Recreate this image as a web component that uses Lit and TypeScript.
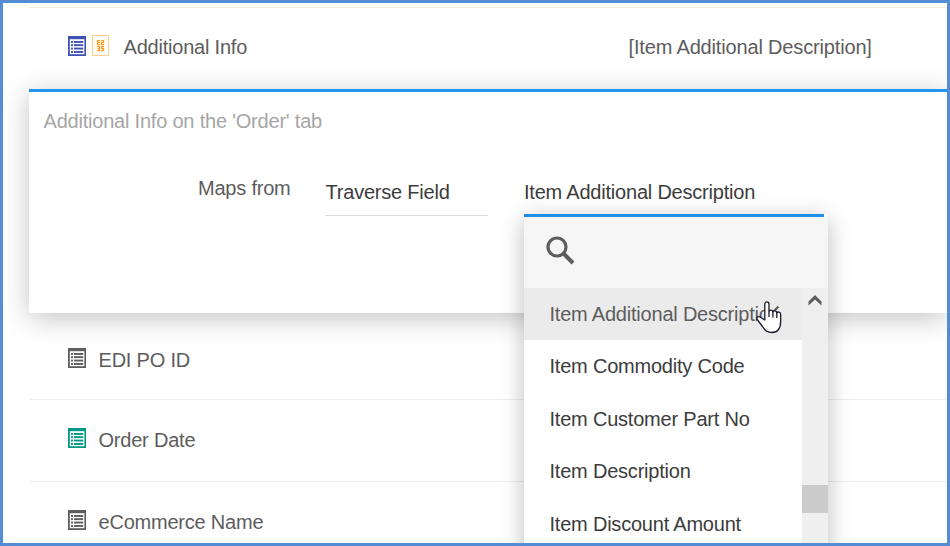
import { LitElement, html, css, svg } from "lit";
import { customElement, property } from "lit/decorators.js";

@customElement("list-icon")
class ListIcon extends LitElement {
  static styles = css`
    :host { display: block; width: 18px; height: 20px; }
    svg { display: block; }
  `;
  render() {
    return html`<svg width="18" height="20" viewBox="0 0 18 20">
      <rect width="18" height="20" fill="currentColor" />
      <rect x="1.800" y="3.200" width="14.600" height="15" fill="#fff" />
      ${[5, 8.2, 11.6, 15].map(
        (y) => svg`<rect x="3" y=${y} width="2" height="1.900" fill="currentColor" />
        <rect x="6" y=${y} width="9.200" height="1.900" fill="currentColor" />`
      )}
    </svg>`;
  }
}

@customElement("field-row")
class FieldRow extends LitElement {
  @property() label = "";
  @property() value = "";
  @property() tone = "gray";
  @property({ type: Boolean }) segment = false;

  static styles = css`
    :host { display: block; box-sizing: border-box; border-bottom: 1px solid #ececec; }
    .row { display: flex; align-items: flex-start; height: 100%; padding-left: 39px; }
    .gray { color: #5d5d5d; }
    .indigo { color: #3f51b5; }
    .teal { color: #009688; }
    .main { display: flex; width: 560.500px; }
    .seg { display: block; margin: -1px 0 0 6px; }
    .label { margin-left: 12.500px; line-height: 24px; white-space: nowrap; }
    .seg + .label { margin: -1px 0 0 14.500px; }
    .value { margin-top: -1px; line-height: 24px; white-space: nowrap; letter-spacing: -.16px; }
  `;
  render() {
    return html`<div class="row">
      <div class="main">
        <list-icon class=${this.tone}></list-icon>
        ${this.segment
          ? html`<svg class="seg" width="17" height="21" viewBox="0 0 17 21">
              <rect x=".5" y=".5" width="16" height="20" fill="#fffdf9" stroke="#ffcf8b" />
              <path d="M8 5.500H5.500V9.500H8M6 7.500H8M9 5.500H11.500V7.500H9.500V9.500H12M5 11.500H7.500V15.500H5M5.500 13.500H7M12 11.500H9.500V13.500H11.500V15.500H9" fill="none" stroke="#fba026" stroke-width="1.250" />
            </svg>`
          : ""}
        <span class="label">${this.label}</span>
      </div>
      <span class="value">${this.value}</span>
    </div>`;
  }
}

@customElement("field-picker")
class FieldPicker extends LitElement {
  static styles = css`
    :host { display: block; width: 304px; background: #fff; box-shadow: 0 5px 22px rgba(0, 0, 0, .26); }
    .accent { width: 300px; height: 3px; background: #1e8eea; }
    .top { background: #fff; }
    .search { height: 71px; background: #f6f6f6; }
    .search svg { display: block; padding: 16.500px 0 0 19.500px; }
    .body { display: flex; height: 300px; }
    .items { width: 278px; }
    .item { height: 52.5px; line-height: 52px; padding-left: 25.500px; box-sizing: border-box; white-space: nowrap; color: #3c3c3c; overflow: hidden; }
    .active { background: #ebebeb; color: #5d5d5d; height: 52px; display: flex; align-items: center; }
    .name { width: 217px; flex: none; overflow: hidden; }
    .active svg { flex: none; margin: -6px 0 0 1px; }
    .track { width: 26px; background: #efefef; }
    .track svg { display: block; margin: 7px 0 0 6px; }
    .thumb { height: 28px; margin-top: 179px; background: #cbcbcb; }
  `;
  render() {
    const items = ["Item Commodity Code", "Item Customer Part No", "Item Description", "Item Discount Amount"];
    return html`
      <div class="top"><div class="accent"></div></div>
      <div class="search">
        <svg width="34" height="34" viewBox="0 0 34 34" fill="none" stroke="#5d5d5d">
          <circle cx="13.500" cy="13.500" r="9" stroke-width="3.200" />
          <path d="M20 20L29.500 29.500" stroke-width="4" />
        </svg>
      </div>
      <div class="body">
        <div class="items">
          <div class="item active">
            <span class="name">Item Additional Description</span>
            <svg width="12" height="12" viewBox="0 0 12 12"><path d="M1 11L10.500 1.500" stroke="#5d5d5d" stroke-width="2.300" /></svg>
          </div>
          ${items.map((i) => html`<div class="item">${i}</div>`)}
        </div>
        <div class="track">
          <svg width="14" height="11" viewBox="0 0 14 11"><path d="M.5 6.500L7 0L13.500 6.500V10.500L7 4.500L.5 10.500Z" fill="#5d5d5d" /></svg>
          <div class="thumb"></div>
        </div>
      </div>
    `;
  }
}

@customElement("app-root")
class AppRoot extends LitElement {
  static styles = css`
    :host {
      display: block; position: relative; box-sizing: border-box; width: 950px; height: 546px;
      overflow: hidden; border: 3px solid #558dd5; background: #fff; color: #5d5d5d;
      font: 20px "Liberation Sans", Arial, sans-serif; letter-spacing: -.21px;
    }
    .list { margin-left: 26px; padding-top: 4px; }
    .first { border-top: 1px solid #ececec; border-bottom: 0; height: 82px; padding-top: 28px; }
    .panel {
      position: relative; box-sizing: border-box; height: 224px; border-top: 3px solid #2196f3;
      background: #fff; box-shadow: 0 5px 26px rgba(0, 0, 0, .24); padding: 17px 0 0 14.500px;
    }
    .hint { color: #a6a6a6; line-height: 24px; }
    .mapping { display: flex; align-items: flex-start; padding-top: 43px; color: #3c3c3c; }
    .caption { width: 126.500px; padding-left: 154.500px; line-height: 24px; color: #5d5d5d; }
    .select { width: 162px; height: 39px; padding-left: 1px; margin-right: 36.500px; border-bottom: 1px solid #dcdcdc; line-height: 32px; }
    .chosen { line-height: 32px; }
    .po { height: 87px; padding-top: 35px; }
    .date { height: 82px; padding-top: 28px; }
    .name { height: 82px; padding-top: 28px; }
    .menu { position: absolute; left: 521px; top: 211px; }
    .hand { position: absolute; left: 753px; top: 298px; }
  `;
  render() {
    return html`
      <div class="list">
        <field-row class="first" label="Additional Info" value="[Item Additional Description]" tone="indigo" segment></field-row>
        <div class="panel">
          <div class="hint">Additional Info on the 'Order' tab</div>
          <div class="mapping">
            <span class="caption">Maps from</span>
            <span class="select">Traverse Field</span>
            <span class="chosen">Item Additional Description</span>
          </div>
        </div>
        <field-row class="po" label="EDI PO ID"></field-row>
        <field-row class="date" label="Order Date" tone="teal"></field-row>
        <field-row class="name" label="eCommerce Name"></field-row>
      </div>
      <field-picker class="menu"></field-picker>
      <svg class="hand" width="27" height="33" viewBox="0 0 27 33">
        <path d="M8.800 19V3.200C8.800 0 13 0 13 3.200V10.500C13.500 8.500 16.800 8.600 16.900 11.200C17.500 9.300 20.700 9.500 20.800 12C21.500 10.300 24.700 10.800 24.700 13.500V20C24.700 27.500 22 31.500 16 31.500C11 31.500 8.500 29 6.500 25.500L1.200 18.500C0 16.500 2.500 14.800 4.500 16.200Z" fill="#fff" stroke="#1a1a2e" stroke-width="1.300" stroke-linejoin="round" />
        <path d="M13 10.500V16M16.900 11.200V16.500M20.800 12V17" fill="none" stroke="#1a1a2e" stroke-width="1.300" />
      </svg>
    `;
  }
}
